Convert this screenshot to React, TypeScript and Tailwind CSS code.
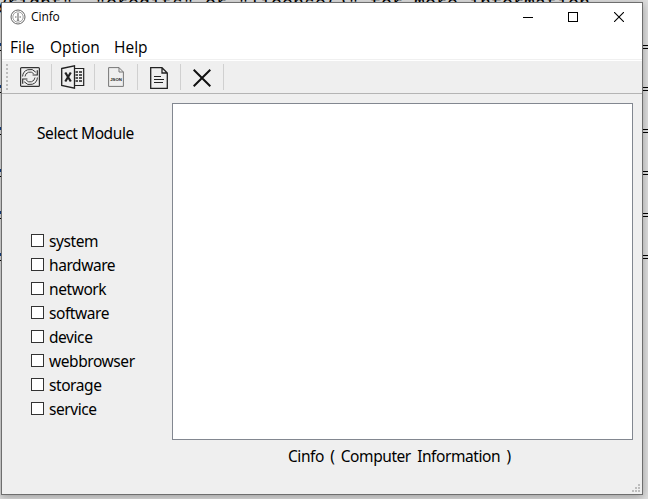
const modules = ['system', 'hardware', 'network', 'software', 'device', 'webbrowser', 'storage', 'service'];
const rows = [0, 1, 2, 3, 4, 5];

function Separator() {
  return <div className="h-[26px] w-px bg-[#d0d0d0]" />;
}

function AppIcon() {
  return (
    <svg className="h-4 w-4" viewBox="0 0 16 16" fill="none" stroke="#666">
      <circle cx="8" cy="8" r="7" strokeWidth="1" />
      <circle cx="8" cy="8" r="5.2" strokeWidth=".8" stroke="#888" />
      <path d="M8 4v7M5 8h1.500M9.500 8H11M6.800 11.200h2.400" strokeWidth="1.100" />
    </svg>
  );
}

function RefreshIcon() {
  return (
    <svg className="h-5 w-5" viewBox="0 0 20 20" fill="none" stroke="#333">
      <rect x=".6" y=".6" width="18.8" height="18.8" rx="1" strokeWidth="1.2" />
      <path d="M2.600 9.500A7.400 7.400 0 0 1 15.800 5.200M17.400 10.500A7.400 7.400 0 0 1 4.200 14.800" strokeWidth="1" />
      <path d="M5 9.500A5 5 0 0 1 13.700 6.700M15 10.500A5 5 0 0 1 6.300 13.300" strokeWidth=".9" />
      <path d="M17.300 3.300v4.700h-4.700M2.700 16.700V12h4.700" strokeWidth="1.200" />
    </svg>
  );
}

function ExcelIcon() {
  return (
    <svg className="h-6 w-6" viewBox="0 0 24 24" fill="none" stroke="#222">
      <path d="M.7 3.500 13.500.8v22.400L.7 20.500z" strokeWidth="1.300" />
      <path d="M13.500 3.500h9.200v17h-9.200" strokeWidth="1.200" />
      <path d="M4.300 7.500l5.500 9M9.800 7.500l-5.500 9" strokeWidth="2.200" />
      <path d="M14.500 7h2.500M18 7h3M14.500 10h2.500M18 10h3M14.500 13h2.500M18 13h3M14.500 16h2.500M18 16h3" strokeWidth="1.300" />
    </svg>
  );
}

function JsonIcon() {
  return (
    <svg className="h-5 w-4" viewBox="0 0 16 20" fill="none" stroke="#777">
      <path d="M.6.600h10.400l4.400 4.400v14.400H.6zM11 .6V5h4.400" strokeWidth="1" />
      <text x="8" y="13.500" textAnchor="middle" fontFamily="Liberation Sans, sans-serif" fontWeight="700" fontSize="4.300" fill="#222" stroke="none">JSON</text>
    </svg>
  );
}

function TextIcon() {
  return (
    <svg className="h-[22px] w-[18px]" viewBox="0 0 18 22" fill="none" stroke="#222">
      <path d="M.7.700h11.300l5.300 5.300v15.300H.7zM12 .7V6h5.300" strokeWidth="1.300" />
      <path d="M4 9.500h7M4 12.500h10M4 15.500h9" strokeWidth="1.200" />
    </svg>
  );
}

export default function App() {
  return (
    <div className="relative h-[499px] w-[648px] overflow-hidden bg-[#dedede] font-['Open_Sans','Noto_Sans',sans-serif] text-black">
      {/* Console window behind the application */}
      <div className="absolute top-[-5px] left-[-4px] font-['Liberation_Mono',monospace] text-[18.33px] leading-[20px] whitespace-pre">
        {'yright", "credits" or "license()" for more information.'}
      </div>
      {rows.map((i) => (
        <div key={i} className="absolute left-0 flex w-[648px] justify-between" style={{ top: 43 + i * 42 }}>
          <div className="h-[8px] w-px border-t-3 border-b border-t-[#123f85] border-b-black" />
          <div className="mt-[2px] h-[4px] w-[6px] border-y border-black" />
        </div>
      ))}

      <div className="absolute top-[2px] left-px flex h-[493px] w-[642px] flex-col border border-[#6e6e6e] bg-[#efefef] shadow-[0_2px_8px_rgba(0,0,0,0.3)]">
        <div className="flex h-[28px] shrink-0 items-center bg-white pl-2">
          <AppIcon />
          <span className="ml-[5px] text-[12px] tracking-[-0.1px]">Cinfo</span>
          <div className="ml-auto flex items-center pr-[18px]">
            <div className="h-px w-[10px] bg-black" />
            <div className="ml-[35px] h-[10px] w-[10px] border border-black" />
            <svg className="ml-[36px] h-[10px] w-[10px]" viewBox="0 0 10 10" stroke="#000" strokeWidth="1.100"><path d="M0 0 10 10M10 0 0 10" /></svg>
          </div>
        </div>
        <div className="flex h-[29px] shrink-0 items-center gap-4 border-b border-[#f0f0f0] bg-white pt-[5px] pl-2 text-[15.500px]">
          <span className="w-[24px]">File</span>
          <span className="w-[48px]">Option</span>
          <span>Help</span>
        </div>
        <div className="h-px shrink-0 bg-white" />
        <div className="flex h-[33px] shrink-0 items-center border-b border-[#b4b4b4]">
          <div className="ml-[4px] h-[26px] w-[2px] bg-[repeating-linear-gradient(#bdbdbd_0_2px,transparent_2px_4px)]" />
          <div className="flex w-[43px] justify-center"><RefreshIcon /></div>
          <Separator />
          <div className="flex w-[42px] justify-center"><ExcelIcon /></div>
          <Separator />
          <div className="flex w-[42px] justify-center"><JsonIcon /></div>
          <Separator />
          <div className="flex w-[42px] justify-center pt-[2px]"><TextIcon /></div>
          <Separator />
          <div className="flex w-[42px] justify-center pt-[2px]">
            <svg className="h-[18px] w-[18px]" viewBox="0 0 18 18" stroke="#111" strokeWidth="2"><path d="M.7.700 17.300 17.300M17.300.700.7 17.300" /></svg>
          </div>
          <Separator />
        </div>
        <div className="flex min-h-0 flex-1 font-['Noto_Sans',sans-serif] text-[15.500px]">
          <div className="w-[170px] shrink-0 pt-[27px]">
            <div className="pl-[35px] leading-6 tracking-[-0.43px]">Select Module</div>
            <div className="mt-[84px] pl-[29px]">
              {modules.map((name) => (
                <div key={name} className="flex h-6 items-center gap-[5px] leading-6">
                  <div className="mb-[2px] h-[13px] w-[13px] border border-[#333] bg-white" />
                  <span className="tracking-[-0.43px]">{name}</span>
                </div>
              ))}
            </div>
          </div>
          <div className="flex flex-1 flex-col pt-[9px] pr-[9px]">
            <div className="h-[337px] shrink-0 border border-[#828790] bg-white" />
            <div className="mt-[4px] pl-[116px] leading-6 tracking-[-0.43px] whitespace-nowrap [word-spacing:2.7px]">Cinfo ( Computer Information )</div>
            <div className="mt-auto mb-[2px] ml-auto grid translate-x-[7px] grid-cols-3 gap-px [&>.on]:bg-[#bdbdbd] [&>i]:h-[2px] [&>i]:w-[2px]">
              <i /><i /><i className="on" />
              <i /><i className="on" /><i className="on" />
              <i className="on" /><i className="on" /><i className="on" />
            </div>
          </div>
        </div>
      </div>
    </div>
  );
}
